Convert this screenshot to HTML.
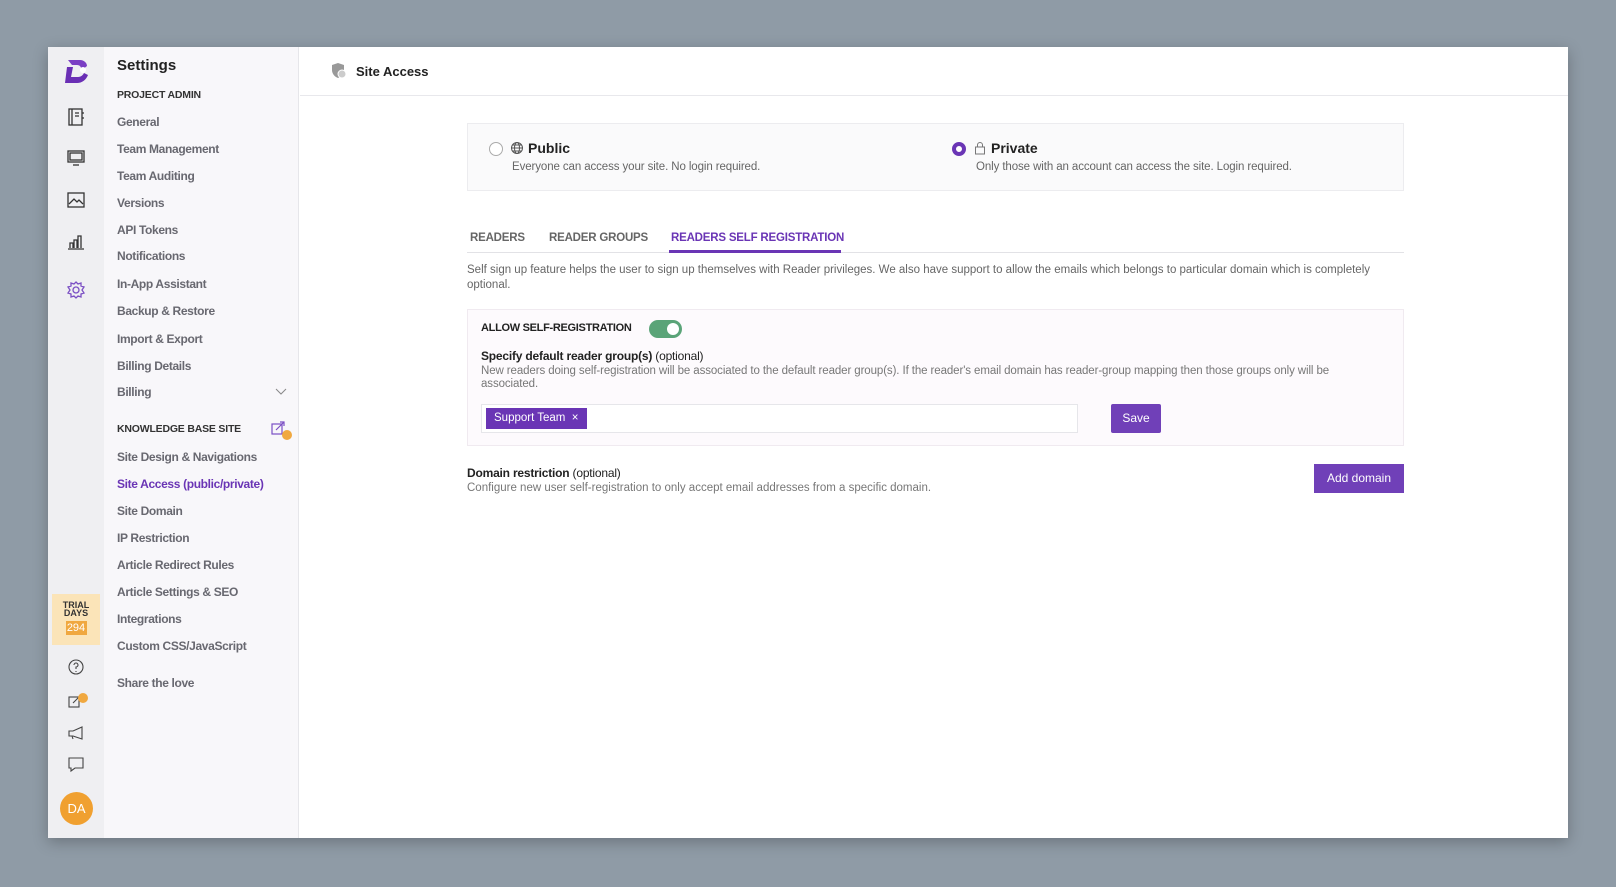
<!DOCTYPE html>
<html><head><meta charset="utf-8"><style>
*{margin:0;padding:0;box-sizing:border-box}
body{width:1616px;height:887px;background:#8f9ba6;font-family:"Liberation Sans",sans-serif;position:relative;overflow:hidden}
.a{position:absolute;white-space:nowrap}
.panel{position:absolute;left:48px;top:47px;width:1520px;height:791px;background:#fff;box-shadow:0 4px 14px rgba(0,0,0,.25)}
.rail{position:absolute;left:48px;top:47px;width:56px;height:791px;background:#efeff2}
.side{position:absolute;left:104px;top:47px;width:195px;height:791px;background:#f8f7fa;border-right:1px solid #e6e6ea}
.nav{position:absolute;left:117px;font-size:12px;color:#686870;font-weight:bold;letter-spacing:-.35px}
.cap{position:absolute;left:117px;font-size:10.5px;color:#333;font-weight:bold;letter-spacing:-.2px}
.ic{position:absolute;left:66px}
</style></head><body>
<div class="panel"></div>
<div class="rail"></div>
<div class="side"></div>
<svg class="a" style="left:63px;top:57px" width="28" height="28" viewBox="0 0 28 28"><path d="M5 3h12c4 0 7 3 7 6l-5 4c-1-3-2-5-5-5H9z" fill="#7b3fc4"/><path d="M4 10h6l-2 10h7c3 0 5-2 6-4l4 2c-2 5-6 8-11 8H2z" fill="#6a2fb5"/><circle cx="20" cy="13" r="3" fill="#fff"/></svg>
<svg class="ic" style="top:107px" width="20" height="20" viewBox="0 0 20 20" fill="none" stroke="#333" stroke-width="1.3"><rect x="3" y="2" width="13" height="16"/><path d="M6 2v16M9 6h4M9 9h4M16 6h2M16 11h2"/></svg>
<svg class="ic" style="top:148px" width="20" height="20" viewBox="0 0 20 20" fill="none" stroke="#333" stroke-width="1.3"><rect x="2" y="3" width="16" height="11"/><rect x="4" y="5" width="12" height="7"/><path d="M7 17h6"/></svg>
<svg class="ic" style="top:190px" width="20" height="20" viewBox="0 0 20 20" fill="none" stroke="#333" stroke-width="1.3"><rect x="2" y="3" width="16" height="14"/><path d="M3 14l5-5 3 3 2-2 4 4"/></svg>
<svg class="ic" style="top:232px" width="20" height="20" viewBox="0 0 20 20" fill="none" stroke="#333" stroke-width="1.3"><path d="M2 17h16M4 16v-5h3v5M8 16V8h3v8M12 16V4h3v12"/></svg>
<svg class="ic" style="top:280px" width="20" height="20" viewBox="0 0 20 20" fill="none" stroke="#7b4fc4" stroke-width="1.3"><circle cx="10" cy="10" r="3"/><path d="M10 2l2 2 3-1 0 3 3 1-2 3 2 3-3 1 0 3-3-1-2 2-2-2-3 1 0-3-3-1 2-3-2-3 3-1 0-3 3 1z"/></svg>
<div class="a" style="left:52px;top:594px;width:48px;height:51px;background:#fbe4b8;text-align:center;font-size:9px;font-weight:bold;color:#333;line-height:8px;padding-top:7px">TRIAL<br>DAYS<div style="margin:4px auto 0;width:21px;height:14px;background:#f0a840;color:#fff;font-size:11px;line-height:14px;font-weight:normal">294</div></div>
<svg class="ic" style="top:657px" width="20" height="20" viewBox="0 0 20 20" fill="none" stroke="#444" stroke-width="1.1"><circle cx="10" cy="10" r="7"/><path d="M8 8a2 2 0 1 1 2 2v2M10 14v1"/></svg>
<svg class="ic" style="top:691px" width="26" height="20" viewBox="0 0 26 20" fill="none" stroke="#444" stroke-width="1.1"><rect x="3" y="6" width="10" height="10"/><path d="M7 12l7-7"/><circle cx="17" cy="7" r="5" fill="#f0a840" stroke="none"/></svg>
<svg class="ic" style="top:723px" width="20" height="20" viewBox="0 0 20 20" fill="none" stroke="#444" stroke-width="1.1"><path d="M3 8h4l9-4v12l-9-3H3zM6 13l1 3"/></svg>
<svg class="ic" style="top:755px" width="20" height="20" viewBox="0 0 20 20" fill="none" stroke="#444" stroke-width="1.1"><path d="M3 3h14v10H9l-4 3v-3H3z"/></svg>
<div class="a" style="left:60px;top:792px;width:33px;height:33px;border-radius:50%;background:#f0a030;color:#fff;font-size:13px;text-align:center;line-height:33px">DA</div>
<div class="a" style="left:117px;top:57px;font-size:15px;font-weight:bold;color:#222">Settings</div>
<div class="cap" style="top:89px">PROJECT ADMIN</div>
<div class="nav" style="top:115px">General</div>
<div class="nav" style="top:142px">Team Management</div>
<div class="nav" style="top:169px">Team Auditing</div>
<div class="nav" style="top:196px">Versions</div>
<div class="nav" style="top:223px">API Tokens</div>
<div class="nav" style="top:249px">Notifications</div>
<div class="nav" style="top:277px">In-App Assistant</div>
<div class="nav" style="top:304px">Backup &amp; Restore</div>
<div class="nav" style="top:332px">Import &amp; Export</div>
<div class="nav" style="top:359px">Billing Details</div>
<div class="nav" style="top:385px">Billing</div>
<svg class="a" style="left:275px;top:388px" width="12" height="8" viewBox="0 0 12 8" fill="none" stroke="#888"><path d="M1 1l5 5 5-5"/></svg>
<div class="cap" style="top:423px">KNOWLEDGE BASE SITE</div>
<svg class="a" style="left:271px;top:420px" width="24" height="24" viewBox="0 0 24 24" fill="none" stroke="#7b4fc4" stroke-width="1.2"><rect x="1" y="4" width="10" height="10"/><path d="M5 10l8-8M9 2h4v4"/><circle cx="16" cy="15" r="5" fill="#f0a840" stroke="none"/></svg>
<div class="nav" style="top:450px">Site Design &amp; Navigations</div>
<div class="nav" style="top:477px;color:#6a35b5">Site Access (public/private)</div>
<div class="nav" style="top:504px">Site Domain</div>
<div class="nav" style="top:531px">IP Restriction</div>
<div class="nav" style="top:558px">Article Redirect Rules</div>
<div class="nav" style="top:585px">Article Settings &amp; SEO</div>
<div class="nav" style="top:612px">Integrations</div>
<div class="nav" style="top:639px">Custom CSS/JavaScript</div>
<div class="nav" style="top:676px">Share the love</div>
<div class="a" style="left:300px;top:95px;width:1268px;height:1px;background:#e8e8ec"></div>
<svg class="a" style="left:330px;top:62px" width="18" height="18" viewBox="0 0 18 18"><path d="M8 1l6 2v5c0 4-3 7-6 8-3-1-6-4-6-8V3z" fill="#999"/><circle cx="12" cy="12" r="4" fill="#ccc" stroke="#fff"/></svg>
<div class="a" style="left:356px;top:64px;font-size:13px;font-weight:bold;color:#222">Site Access</div>
<div class="a" style="left:467px;top:123px;width:937px;height:68px;background:#fafafb;border:1px solid #ececef"></div>
<div class="a" style="left:489px;top:142px;width:14px;height:14px;border-radius:50%;border:1px solid #aaa;background:#fff"></div>
<svg class="a" style="left:510px;top:141px" width="14" height="14" viewBox="0 0 14 14" fill="none" stroke="#555"><circle cx="7" cy="7" r="5.5"/><ellipse cx="7" cy="7" rx="2.5" ry="5.5"/><path d="M1.5 7h11M2.5 4h9M2.5 10h9"/></svg>
<div class="a" style="left:528px;top:140px;font-size:14px;font-weight:bold;color:#222">Public</div>
<div class="a" style="left:512px;top:161px;font-size:11.5px;color:#666;letter-spacing:-.1px">Everyone can access your site. No login required.</div>
<div class="a" style="left:952px;top:142px;width:14px;height:14px;border-radius:50%;border:4px solid #6a35b5;background:#fff"></div>
<svg class="a" style="left:974px;top:141px" width="12" height="14" viewBox="0 0 12 14" fill="none" stroke="#777"><rect x="1.5" y="6" width="9" height="7"/><path d="M3.5 6V4a2.5 2.5 0 0 1 5 0v2"/></svg>
<div class="a" style="left:991px;top:140px;font-size:14px;font-weight:bold;color:#222">Private</div>
<div class="a" style="left:976px;top:161px;font-size:11.5px;color:#666;letter-spacing:-.1px">Only those with an account can access the site. Login required.</div>
<div class="a" style="left:470px;top:232px;font-size:11.5px;font-weight:bold;color:#666;letter-spacing:-.2px">READERS</div>
<div class="a" style="left:549px;top:232px;font-size:11.5px;font-weight:bold;color:#666;letter-spacing:-.2px">READER GROUPS</div>
<div class="a" style="left:671px;top:232px;font-size:11.5px;font-weight:bold;color:#6a35b5;letter-spacing:-.2px">READERS SELF REGISTRATION</div>
<div class="a" style="left:467px;top:252px;width:937px;height:1px;background:#e2e2e6"></div>
<div class="a" style="left:669px;top:250px;width:172px;height:3px;background:#6a35b5"></div>
<div class="a" style="left:467px;top:263px;font-size:11.5px;color:#666;line-height:15px;white-space:normal;width:910px">Self sign up feature helps the user to sign up themselves with Reader privileges. We also have support to allow the emails which belongs to particular domain which is completely optional.</div>
<div class="a" style="left:467px;top:309px;width:937px;height:137px;background:#fdfafd;border:1px solid #f0eaf0"></div>
<div class="a" style="left:481px;top:322px;font-size:11px;font-weight:bold;color:#222;letter-spacing:-.3px">ALLOW SELF-REGISTRATION</div>
<div class="a" style="left:649px;top:320px;width:33px;height:18px;border-radius:9px;background:#5aa478"><div style="position:absolute;right:3px;top:3px;width:12px;height:12px;border-radius:50%;background:#fff"></div></div>
<div class="a" style="left:481px;top:349px;font-size:12px;color:#222;letter-spacing:-.2px"><b>Specify default reader group(s)</b> (optional)</div>
<div class="a" style="left:481px;top:365px;font-size:11.5px;color:#777;line-height:13px;white-space:normal;width:900px;letter-spacing:-.1px">New readers doing self-registration will be associated to the default reader group(s). If the reader's email domain has reader-group mapping then those groups only will be associated.</div>
<div class="a" style="left:481px;top:404px;width:597px;height:29px;background:#fff;border:1px solid #e6e6ea"></div>
<div class="a" style="left:486px;top:408px;height:21px;padding:0 8px;background:#6a35b5;color:#fff;font-size:11.5px;line-height:21px">Support Team &nbsp;×</div>
<div class="a" style="left:1111px;top:404px;width:50px;height:29px;background:#7040b8;color:#fff;font-size:12px;line-height:29px;text-align:center;border-radius:2px">Save</div>
<div class="a" style="left:467px;top:466px;font-size:12px;color:#222;letter-spacing:-.2px"><b>Domain restriction</b> (optional)</div>
<div class="a" style="left:467px;top:482px;font-size:11.5px;color:#777">Configure new user self-registration to only accept email addresses from a specific domain.</div>
<div class="a" style="left:1314px;top:464px;width:90px;height:29px;background:#7040b8;color:#fff;font-size:12px;line-height:29px;text-align:center">Add domain</div>
</body></html>
